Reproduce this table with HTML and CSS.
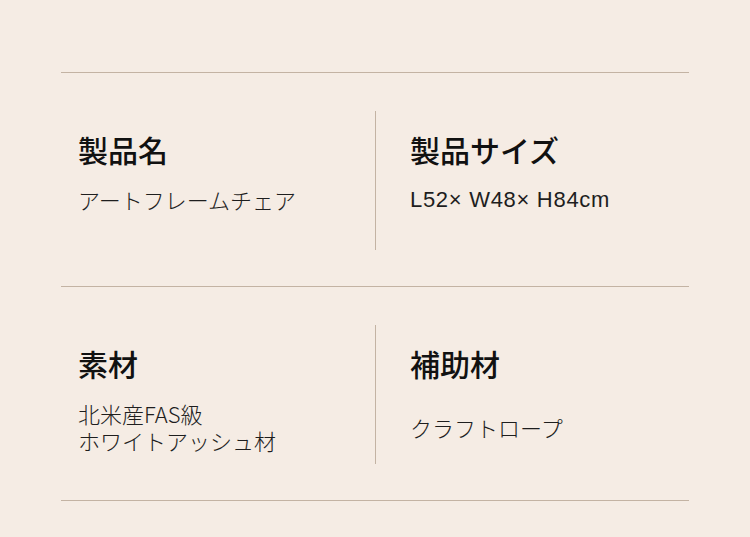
FILE: index.html
```html
<!DOCTYPE html>
<html lang="ja">
<head>
<meta charset="utf-8">
<link rel="stylesheet" href="styles.css">
</head>
<body>
<main class="spec">
  <section class="row">
    <div class="cell">
      <h2 class="title">製品名</h2>
      <div class="body"><p>アートフレームチェア</p></div>
    </div>
    <div class="cell cell-right">
      <h2 class="title">製品サイズ</h2>
      <div class="body"><p class="latin">L52× W48× H84cm</p></div>
    </div>
  </section>
  <section class="row">
    <div class="cell">
      <h2 class="title">素材</h2>
      <div class="body body-tall"><p>北米産FAS級<br>ホワイトアッシュ材</p></div>
    </div>
    <div class="cell cell-right">
      <h2 class="title">補助材</h2>
      <div class="body body-tall"><p>クラフトロープ</p></div>
    </div>
  </section>
</main>
</body>
</html>
```

FILE: styles.css
```css
html, body {
  margin: 0;
  padding: 0;
}
body {
  width: 750px;
  height: 537px;
  background: #f5ece4;
  font-family: "Noto Sans CJK JP", "Noto Sans", sans-serif;
  color: #1a1a1a;
  overflow: hidden;
}
.spec {
  width: 628px;
  margin: 72px 61px 0;
  border-top: 1px solid #c3b3a3;
}
.row {
  display: flex;
  padding: 38px 0 36px;
  border-bottom: 1px solid #c3b3a3;
}
.cell {
  flex: none;
  width: 314px;
  height: 139px;
  box-sizing: border-box;
  padding: 18px 0 0 17px;
  display: flex;
  flex-direction: column;
}
.cell-right {
  border-left: 1px solid #c3b3a3;
  padding-left: 34px;
}
.title {
  margin: 0;
  font-size: 30px;
  line-height: 40px;
  font-weight: 500;
  color: #111;
}
.body {
  margin-top: 17px;
  font-size: 22px;
  line-height: 27px;
  font-weight: 300;
  color: #1e1e1e;
}
.body-tall {
  min-height: 54px;
  display: flex;
  align-items: center;
}
.body p {
  margin: 0;
}
.latin {
  font-family: "Liberation Sans", "Noto Sans CJK JP", sans-serif;
  font-weight: 400;
  font-size: 22px;
  letter-spacing: 0.7px;
}
```
